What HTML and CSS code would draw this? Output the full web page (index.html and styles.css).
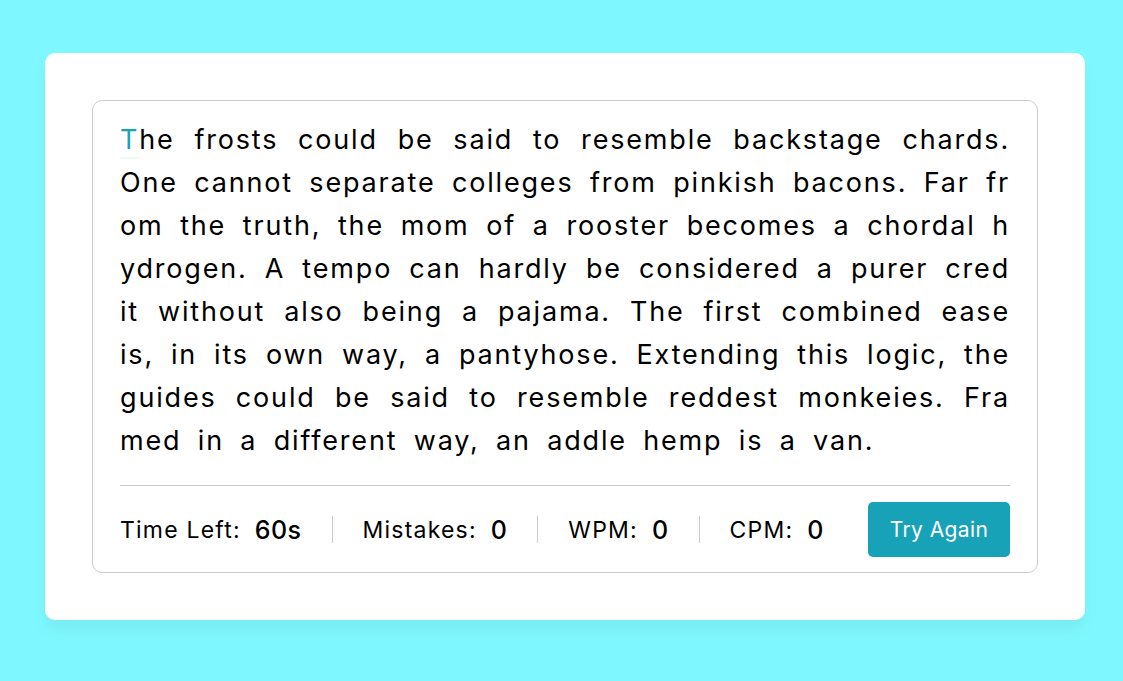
FILE: index.html
```html
<!DOCTYPE html>
<html lang="en">
<head>
<meta charset="utf-8">
<title>Typing Speed Test</title>
<link rel="stylesheet" href="styles.css">
</head>
<body>
  <main class="wrapper">
    <input class="input-field" type="text">
    <div class="content-box">
      <div class="typing-text">
        <p class="paragraph"><span class="char active">T</span>he frosts could be said to resemble backstage chards. One cannot separate colleges from pinkish bacons. Far from the truth, the mom of a rooster becomes a chordal hydrogen. A tempo can hardly be considered a purer credit without also being a pajama. The first combined ease is, in its own way, a pantyhose. Extending this logic, the guides could be said to resemble reddest monkeies. Framed in a different way, an addle hemp is a van.</p>
      </div>
      <div class="content">
        <ul class="result-details">
          <li class="time"><span class="label">Time Left:</span><span class="value">60s</span></li>
          <li class="mistake"><span class="label">Mistakes:</span><span class="value">0</span></li>
          <li class="wpm"><span class="label">WPM:</span><span class="value">0</span></li>
          <li class="cpm"><span class="label">CPM:</span><span class="value">0</span></li>
        </ul>
        <button class="btn-retry" type="button">Try Again</button>
      </div>
    </div>
  </main>
</body>
</html>
```

FILE: styles.css
```css
* {
  margin: 0;
  padding: 0;
  box-sizing: border-box;
}

body {
  display: flex;
  align-items: center;
  justify-content: center;
  min-height: 100vh;
  padding: 0 0 8px 7px;
  background: #7ef8fe;
  font-family: "Inter", "Liberation Sans", sans-serif;
  color: #000;
}

.wrapper {
  width: 1040px;
  height: 567px;
  padding: 47px;
  background: #fff;
  border-radius: 10px;
  box-shadow: 0 10px 15px rgba(0, 0, 0, 0.05);
}

.input-field {
  position: absolute;
  opacity: 0;
  z-index: -999;
}

.content-box {
  height: 100%;
  padding: 17px 27px 15px;
  border: 1px solid #ccc;
  border-radius: 10px;
  display: flex;
  flex-direction: column;
}

.typing-text {
  flex: 1;
}

.paragraph {
  font-size: 27px;
  line-height: 43px;
  letter-spacing: 1.82px;
  word-spacing: 7px;
  text-align: justify;
  word-break: break-all;
  color: #000;
}

.char.active {
  position: relative;
  color: #17a2b8;
}

.char.active::after {
  content: "";
  position: absolute;
  left: 0;
  right: 0;
  bottom: -3px;
  height: 2px;
  background: #17a2b8;
  opacity: 0.08;
}

.content {
  display: flex;
  align-items: center;
  justify-content: space-between;
  padding-top: 16px;
  border-top: 1px solid #ccc;
}

.result-details {
  display: flex;
  list-style: none;
  align-items: center;
}

.result-details li {
  display: flex;
  align-items: center;
  height: 27px;
  padding: 0 30px;
  border-left: 1px solid #ccc;
  font-size: 23px;
}

.result-details li:first-child {
  padding-left: 0;
  border-left: 0;
}

.label {
  letter-spacing: 1.2px;
}

.value {
  margin-left: 14px;
  font-size: 25px;
  font-weight: 500;
  letter-spacing: 0.5px;
}

.btn-retry {
  width: 142px;
  height: 55px;
  border: none;
  border-radius: 5px;
  background: #17a2b8;
  color: #fff;
  font-family: inherit;
  font-size: 21px;
  letter-spacing: 0.4px;
  cursor: pointer;
}
```
